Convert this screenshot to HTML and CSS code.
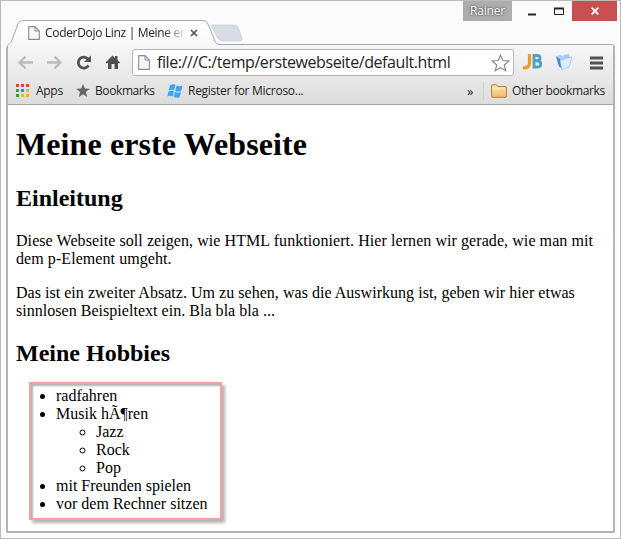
FILE: index.html
```html
<!DOCTYPE html>
<html lang="de">
<head>
<meta charset="utf-8">
<title>CoderDojo Linz | Meine erste Webseite</title>
<link rel="stylesheet" href="styles.css">
</head>
<body>
<div class="window">
  <header class="titlebar">
    <div class="tab">
      <svg class="tab-shape" width="244" height="27" viewBox="0 0 244 27">
        <defs><linearGradient id="tabfill" x1="0" y1="0" x2="0" y2="1"><stop offset="0" stop-color="#fff"/><stop offset="1" stop-color="#f7f7f7"/></linearGradient></defs>
        <path d="M0 22H5L2 27H0Z" fill="#fbfbfb"/>
        <path d="M1.500 27C1.500 23 4.500 24 5.500 21L12 4Q13.500 .5 17 .5H197Q200.500 .5 202 4L208.500 20Q210 24.500 214 24.500H244V26Z" fill="url(#tabfill)"/>
        <path d="M1.500 27C1.500 23 4.500 24 5.500 21L12 4Q13.500 .5 17 .5H197Q200.500 .5 202 4L208.500 20Q210 24.500 214 24.500H244" fill="none" stroke="#a5a5a5"/>
        <path d="M207 5H227Q231 5 232 7L236 18Q237 21 233 21H217Q213 21 211 17L206 7Q205 5 207 5Z" fill="#d8dde4" stroke="#c9cdd2" stroke-width=".7"/>
      </svg>
      <svg class="tab-doc" width="12" height="14" viewBox="0 0 12 14"><path d="M.7.6H7L11.300 5V13.400H.7Z" fill="#f7f7f7" stroke="#8c8c8c" stroke-width="1.100"/><path d="M7 .6V5h4.300" fill="none" stroke="#8c8c8c"/></svg>
      <span class="tab-title">CoderDojo Linz | Meine er</span>
      <svg class="tab-close" width="8" height="8" viewBox="0 0 8 8"><path d="M1 1l6 6M7 1L1 7" stroke="#555" stroke-width="1.700"/></svg>
    </div>
    <div class="controls">
      <span class="user">Rainer</span>
      <svg width="60" height="20" viewBox="0 0 60 20"><path d="M16 13.500h8" stroke="#222" stroke-width="2"/><path d="M42.500 7v6.500h9V7" fill="none" stroke="#222"/><path d="M42 7.500h10" stroke="#222" stroke-width="2"/></svg>
      <span class="close"><svg width="8" height="8" viewBox="0 0 8 8"><path d="M.7.7l6.600 6.600M7.300.7L.7 7.300" stroke="#fff" stroke-width="1.800"/></svg></span>
    </div>
  </header>
  <div class="browser">
    <div class="chrome">
      <div class="toolbar">
        <svg class="nav" width="118" height="34" viewBox="0 0 118 34">
          <g fill="none" stroke="#bcbcbc" stroke-width="2.400"><path d="M11.500 17.500H25M17.500 11.500l-6 6 6 6M39 17.500h13.500M46.500 11.500l6 6-6 6"/></g>
          <path d="M80 14A5.500 5.500 0 1 0 80.500 20.500" fill="none" stroke="#505050" stroke-width="2.800"/><path d="M83 10.500v6.500h-7Z" fill="#505050"/>
          <path d="M97.500 17.500L104.500 10.500l2.500 2.500V11h2.500v4l2.500 2.500-1 1-1-.7V24h-3.500v-5h-3v5H100v-6.200l-1.500.7Z" fill="#505050"/>
        </svg>
        <div class="omnibox">
          <svg width="12" height="15" viewBox="0 0 12 15"><path d="M.7.6H7L11.300 5V14.400H.7Z" fill="#f6f6f6" stroke="#8c8c8c" stroke-width="1.100"/><path d="M7 .6V5h4.300" fill="none" stroke="#8c8c8c"/></svg>
          <span class="url">file:///C:/temp/erstewebseite/default.html</span>
          <svg class="star" width="19" height="18" viewBox="0 0 19 18"><path d="M9.500 1.200L11.800 6.500 17.700 7 13.300 11 14.700 16.700 9.500 13.600 4.300 16.700 5.700 11 1.300 7 7.200 6.500Z" fill="#fff" stroke="#8b8b8b" stroke-width="1.200"/></svg>
        </div>
        <svg class="extensions" width="99" height="34" viewBox="0 0 99 34">
          <path d="M15.500 9v9.500Q15.500 23 9 22.800" fill="none" stroke="#ee9a1e" stroke-width="3.200"/>
          <path d="M20 10.500h3q3 0 3 2.500t-3 2.700H20M23 15.700q3.700 0 3.700 3.200t-3.700 3.100H20V9" fill="none" stroke="#519fc9" stroke-width="2.900"/>
          <path d="M42 11.500l4-1.500 2 1 7-2.500 1.500 9-7 6Z" fill="#a9cdf0"/><path d="M42 11.500l4 2.500 3 10.500-4-3Z" fill="#3f86d8"/><path d="M46 15.500l4-1 1-1 7-1.500-3 10-7 3Z" fill="#dcecfb" stroke="#8dbbe9" stroke-width=".6"/>
          <path d="M76 13h13M76 18h13M76 23h13" stroke="#515151" stroke-width="3"/>
        </svg>
      </div>
      <div class="bookmarks">
        <svg class="apps" width="13" height="13" viewBox="0 0 13 13"><path d="M0 0h3v3H0zM5 0h3v3H5zM10 0h3v3h-3z" fill="#ee4035"/><path d="M0 5h3v3H0zM0 10h3v3H0z" fill="#2c9c57"/><path d="M5 5h3v3H5z" fill="#2189ee"/><path d="M10 5h3v3h-3zM5 10h3v3H5zM10 10h3v3h-3z" fill="#fbb20d"/></svg>
        <span class="label apps-label">Apps</span>
        <svg class="bm-star" width="14" height="13" viewBox="0 0 14 13"><path d="M7 0l1.800 4.500 5 .3-3.900 3.100L11.200 13 7 10.200 2.800 13l1.300-5.100L.2 4.800l5-.3Z" fill="#656565"/></svg>
        <span class="label bm-label">Bookmarks</span>
        <svg class="windows" width="16" height="14" viewBox="0 0 16 14"><path d="M3 1.200Q6-.5 8.500 1L7.300 6.300Q5 5 1.700 6.500ZM9.500 1.500Q12.500 3 15.500 1.500L14.200 7Q11 8.300 8.300 6.700ZM1.500 7.500Q4.500 6 7 7.300L5.800 12.500Q3.500 11 .3 12.500ZM8 7.800Q11 9.500 14 8L12.700 13.200Q10 14.500 6.800 13Z" fill="#38a6f5"/></svg>
        <span class="label register-label">Register for Microso...</span>
        <span class="more">»</span>
        <span class="divider"></span>
        <svg class="folder" width="16" height="14" viewBox="0 0 16 14"><defs><linearGradient id="folderfill" x1="0" y1="0" x2="0" y2="1"><stop offset="0" stop-color="#ffe8ac"/><stop offset="1" stop-color="#f0bb65"/></linearGradient></defs><path d="M.6 12.500V2Q.6.7 2 .7H5.500L7 2.500H14Q15.400 2.500 15.400 4V12Q15.400 13.300 14 13.300H2Q.6 13.300.6 12.500Z" fill="url(#folderfill)" stroke="#b67b35"/><path d="M1.500 4.500H8L9.500 3.500" fill="none" stroke="#fff1c9"/></svg>
        <span class="label other-label">Other bookmarks</span>
      </div>
    </div>
    <main class="page">
      <h1>Meine erste Webseite</h1>
      <h2>Einleitung</h2>
      <p class="intro">Diese Webseite soll zeigen, wie HTML funktioniert. Hier lernen wir gerade, wie man mit dem p-Element umgeht.</p>
      <p>Das ist ein zweiter Absatz. Um zu sehen, was die Auswirkung ist, geben wir hier etwas sinnlosen Beispieltext ein. Bla bla bla ...</p>
      <h2 class="hobbies-title">Meine Hobbies</h2>
      <div class="highlight">
        <ul>
          <li>radfahren</li>
          <li>Musik hÃ¶ren
            <ul><li>Jazz</li><li>Rock</li><li>Pop</li></ul>
          </li>
          <li>mit Freunden spielen</li>
          <li>vor dem Rechner sitzen</li>
        </ul>
      </div>
    </main>
  </div>
</div>
</body>
</html>
```
FILE: styles.css
```css
* { box-sizing: border-box; }
body { margin: 0; overflow: hidden; }
svg { flex: none; display: block; }
.window {
  width: 621px;
  height: 539px;
  border: 1px solid #bababa;
  background: #fbfbfb;
  padding: 0 5px 5px;
  font-family: "Open Sans", "Noto Sans", sans-serif;
  color: #222;
}
.titlebar { display: flex; justify-content: space-between; height: 43px; }
.tab { position: relative; z-index: 1; width: 244px; margin-top: 19px; height: 26px; display: flex; align-items: flex-start; padding-left: 22px; }
.tab-shape { position: absolute; left: 0; top: 0; }
.tab-doc { position: relative; margin-top: 6px; }
.tab-title {
  position: relative;
  width: 139px;
  margin: 4px 0 0 5px;
  font-size: 12px;
  line-height: 17px;
  letter-spacing: -0.32px;
  white-space: nowrap;
  -webkit-mask-image: linear-gradient(to right, #000 118px, transparent 142px);
  mask-image: linear-gradient(to right, #000 118px, transparent 142px);
}
.tab-close { position: relative; margin: 9px 0 0 6px; }
.controls { display: flex; height: 20px; margin-right: -2px; }
.user { width: 49px; background: #adadad; color: #fff; font-size: 12px; line-height: 20px; text-align: center; letter-spacing: -0.2px; text-shadow: 0 0 2px #555, 0 0 2px #555; }
.close { width: 45px; background: #c75050; display: flex; align-items: center; justify-content: center; }
.browser { height: 489px; border: 2px solid; border-color: #a8a8a8 #b3b3b3 #b3b3b3; border-top-width: 1px; border-radius: 4px 4px 2px 2px; background: #fff; }
.chrome { height: 60px; border-bottom: 1px solid #a5a5a5; background: linear-gradient(#f7f7f7, #dcdcdc); }
.toolbar { display: flex; height: 34px; }
.omnibox { width: 382px; height: 27px; margin: 4px 0 0 6px; border: 1px solid #b6b6b6; border-radius: 3px; background: #fff; display: flex; align-items: center; padding: 0 3px 0 5px; }
.url { margin: -1px 0 0 7px; width: 294px; white-space: nowrap; font-size: 16px; line-height: 23px; letter-spacing: -0.42px; }
.star { margin-left: auto; }
.bookmarks { display: flex; align-items: center; height: 23px; padding: 0 9px 0 8px; }
.label { font-size: 12px; line-height: 17px; white-space: nowrap; letter-spacing: -0.28px; }
.apps-label { width: 40px; margin-left: 7px; }
.bm-label { width: 72px; margin-left: 5px; letter-spacing: -0.4px; }
.register-label { margin-left: 5px; }
.more { margin-left: auto; width: 16px; font-size: 13px; line-height: 18px; }
.divider { width: 1px; height: 18px; background: #c8d0d8; margin-right: 7px; }
.other-label { width: 92px; margin-left: 5px; letter-spacing: -0.38px; }
.page { padding: 1px 8px 0; font: 16px/18px "Liberation Serif", serif; color: #000; display: flow-root; }
h1 { margin: 20.44px 0 22.44px; font-size: 32px; line-height: 36px; letter-spacing: .1px; }
h2 { margin: 19.92px 0; font-size: 24px; line-height: 27px; }
p { margin: 16px 0; letter-spacing: .03px; }
.intro { letter-spacing: .07px; }
.page .hobbies-title { margin-bottom: 15px; }
.highlight { width: 193px; height: 138px; margin-left: 13px; border: 2px solid #f5a1a1; padding: 3px 0 0 25px; box-shadow: 3px 3px 3px rgba(0,0,0,.3), inset 2px 2px 2px rgba(0,0,0,.3); white-space: nowrap; }
.highlight > ul { margin: 0; padding-left: 0; }
.highlight ul ul { margin: 0; padding-left: 40px; }
```
